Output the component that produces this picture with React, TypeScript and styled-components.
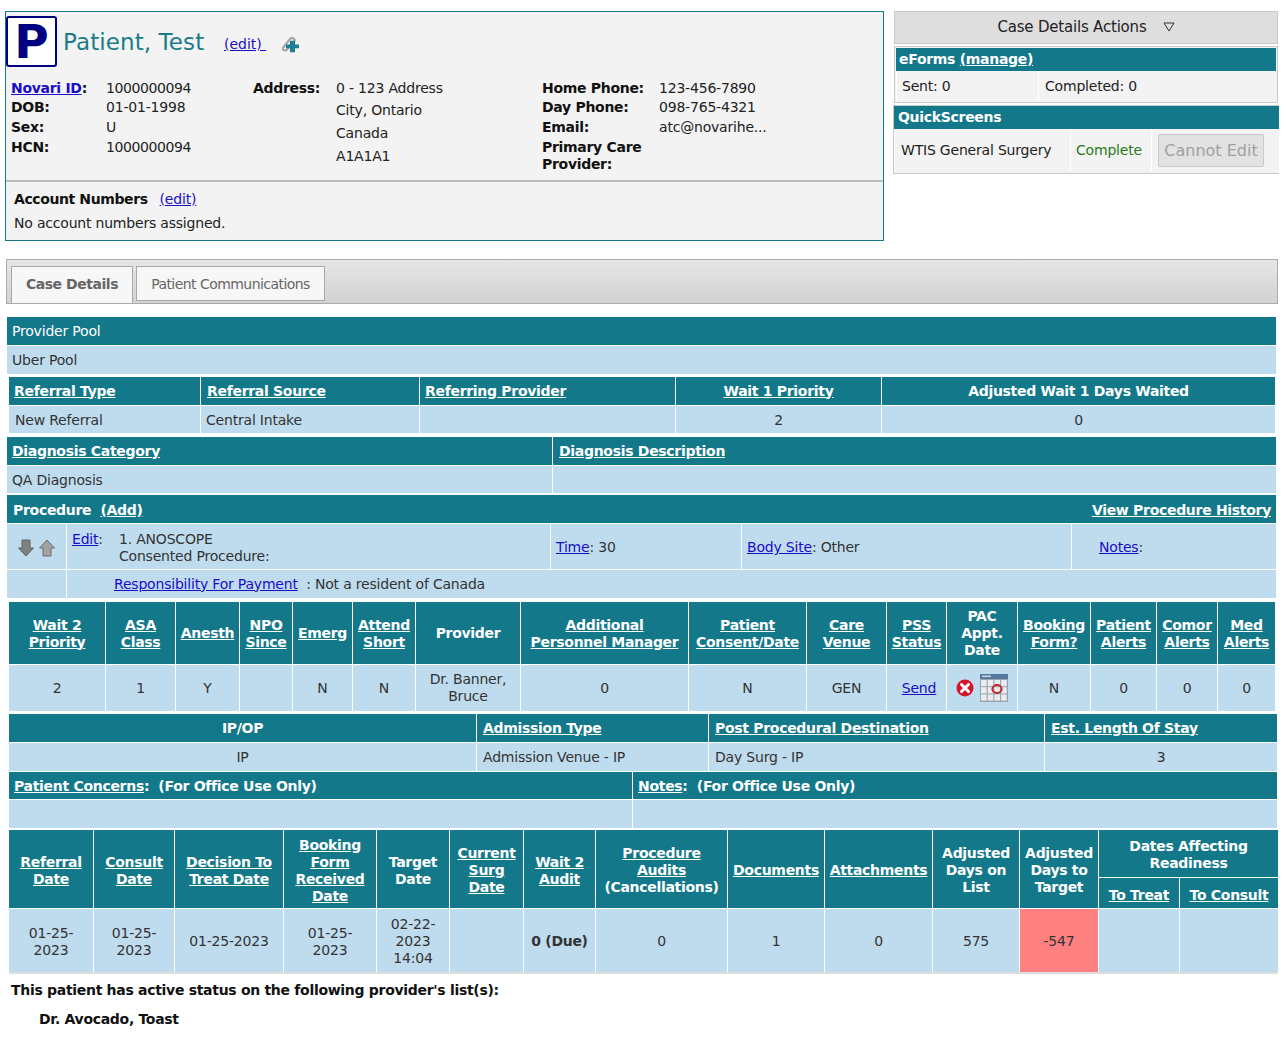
import React from 'react';
import styled, { createGlobalStyle } from 'styled-components';

const Global = createGlobalStyle`
  html, body { margin: 0; padding: 0; background: #fff; }
  body { font-family: "DejaVu Sans", Verdana, sans-serif; font-size: 14px; color: #333; width: 1286px; height: 1050px; overflow: hidden; }
  * { box-sizing: border-box; }
  a { color: #1a0dc8; text-decoration: underline; }
`;

const TEAL = '#137889';
const BLUE = '#bfdcef';

const Page = styled.div`
  display: flex;
  flex-direction: column;
  padding: 11px 0 0 0;
  letter-spacing: -0.2px;
`;
const Top = styled.div`
  display: flex;
  height: 248px;
  align-items: flex-start;
  padding-left: 5px;
`;
const PatientBox = styled.section`
  width: 879px;
  height: 230px;
  background: #f3f3f3;
  border: 1px solid ${TEAL};
  display: flex;
  flex-direction: column;
`;
const NameRow = styled.div`
  height: 57px;
  padding-top: 2px;
  display: flex;
  align-items: center;
`;
const LetterBadge = styled.div`
  width: 51px;
  height: 51px;
  border: 2px solid #000080;
  border-radius: 3px;
  background: #fff;
  color: #000080;
  font-weight: 700;
  font-size: 47px;
  line-height: 47px;
  text-align: center;
  letter-spacing: 0;
`;
const Name = styled.h1`
  margin: 0 0 0 6px;
  font-size: 23px;
  font-weight: 400;
  color: #1b7d88;
  letter-spacing: 0.1px;
  width: 161px;
  line-height: 30px;
`;
const NameEdit = styled.a`
  font-size: 14px;
  letter-spacing: 0;
  width: 55px;
  padding-top: 5px;
  white-space: pre;
`;
const ClipIcon = styled.svg`
  width: 20px;
  height: 20px;
  margin-top: 5px;
`;
const Info = styled.div`
  flex: 1;
  display: grid;
  grid-template-columns: 95px 147px 83px 206px 117px 1fr;
  padding: 10px 0 0 5px;
`;
const InfoStack = styled.div`
  display: flex;
  flex-direction: column;
`;
const InfoLine = styled.div<{ $h: number; $tight?: boolean }>`
  height: ${p => p.$h}px;
  line-height: ${p => p.$h}px;
  color: #222;
  white-space: nowrap;
  ${p => (p.$tight ? 'letter-spacing: -0.4px;' : '')}
`;
const InfoLabel = styled(InfoLine)`
  font-weight: 700;
  color: #111;
  letter-spacing: -0.3px;
`;
const WrapLabel = styled.div`
  font-weight: 700;
  color: #111;
  line-height: 17px;
  margin-top: 2px;
  letter-spacing: -0.3px;
`;
const BoldLink = styled.a`
  font-weight: 700;
`;
const Account = styled.div`
  border-top: 2px solid #bdbdbd;
  height: 60px;
  padding: 5px 8px;
  color: #222;
`;
const AccountTitle = styled.div`
  display: flex;
  height: 24px;
  align-items: center;
  gap: 12px;
  font-weight: 700;
  color: #111;
  letter-spacing: -0.4px;
  & a { font-weight: 400; letter-spacing: -0.2px; }
`;
const AccountText = styled.div`
  height: 24px;
  line-height: 24px;
`;
const Side = styled.aside`
  width: 386px;
  margin-left: 9px;
  display: flex;
  flex-direction: column;
`;
const ActionsBtn = styled.div`
  margin-left: 1px;
  width: 384px;
  height: 33px;
  background: #dedede;
  border: 1px solid #c8c8c8;
  display: flex;
  align-items: center;
  justify-content: center;
  gap: 16px;
  color: #222;
  font-size: 15px;
  padding-bottom: 2px;
`;
const Tri = styled.svg`
  width: 12px;
  height: 10px;
`;
const EForms = styled.div`
  margin: 2px 0 0 1px;
  width: 384px;
  height: 57px;
  background: #f3f3f3;
  border: 1px solid #c8c8c8;
  padding: 1px;
`;
const SideHead = styled.div<{ $pad: number }>`
  background: ${TEAL};
  color: #fff;
  font-weight: 700;
  height: 23px;
  line-height: 23px;
  padding-left: ${p => p.$pad}px;
  letter-spacing: -0.3px;
  & a { color: #fff; }
`;
const SideRow = styled.div<{ $cols: string; $h: number }>`
  display: grid;
  grid-template-columns: ${p => p.$cols};
  height: ${p => p.$h}px;
  align-items: center;
  color: #222;
`;
const SideCell = styled.div<{ $pad: number; $color?: string }>`
  padding-left: ${p => p.$pad}px;
  color: ${p => p.$color ?? '#222'};
  height: 100%;
  display: flex;
  align-items: center;
  border-left: 1px solid #fff;
  white-space: nowrap;
`;
const Quick = styled.div`
  margin-top: 2px;
  width: 386px;
  height: 69px;
  background: #f3f3f3;
  border: 1px solid #c8c8c8;
  border-right: 0;
`;
const DisabledBtn = styled.button`
  width: 106px;
  height: 33px;
  background: #e2e2e2;
  border: 1px solid #c9c9c9;
  border-radius: 2px;
  color: #a0a0a0;
  font: inherit;
  font-size: 16px;
  letter-spacing: 0;
  padding: 0;
`;
const Tabbed = styled.section`
  margin-left: 6px;
  width: 1272px;
`;
const TabBar = styled.div`
  height: 45px;
  border: 1px solid #ababab;
  background: linear-gradient(#e6e6e6, #d4d4d4 90%);
  padding: 6px 0 0 4px;
  display: flex;
  gap: 3px;
`;
const Tab = styled.div<{ $w: number; $active?: boolean }>`
  width: ${p => p.$w}px;
  height: ${p => (p.$active ? 37 : 35)}px;
  background: #f7f7f7;
  border: 1px solid #a8a8a8;
  ${p => (p.$active ? 'border-bottom: 0; font-weight: 700; letter-spacing: -0.45px;' : 'letter-spacing: -0.55px;')}
  color: #666;
  text-align: center;
  line-height: 35px;
`;
const Body = styled.div`
  margin-top: 13px;
  margin-left: 1px;
  width: 1271px;
  display: flex;
  flex-direction: column;
`;
const Row = styled.div<{ $cols: string; $h: number; $inset?: boolean; $mt?: number; $w: number; $nudge?: number }>`
  display: grid;
  grid-template-columns: ${p => p.$cols};
  column-gap: 1px;
  width: ${p => p.$w}px;
  height: ${p => p.$h}px;
  margin-top: ${p => p.$mt ?? 0}px;
  margin-left: ${p => (p.$inset ? 2 : 0)}px;
  ${p => (p.$nudge ? `& > * { padding-top: ${p.$nudge}px; }` : '')}
`;
const HeadCell = styled.div<{ $center?: boolean; $pad?: number; $plain?: boolean }>`
  background: ${TEAL};
  color: #fff;
  font-weight: ${p => (p.$plain ? 400 : 700)};
  letter-spacing: -0.3px;
  display: flex;
  flex-direction: column;
  justify-content: center;
  align-items: ${p => (p.$center ? 'center' : 'flex-start')};
  text-align: ${p => (p.$center ? 'center' : 'left')};
  padding-left: ${p => (p.$center ? 0 : p.$pad ?? 5)}px;
  line-height: 17px;
  white-space: nowrap;
  & a { color: #fff; }
`;
const Split = styled(HeadCell)`
  flex-direction: row;
  justify-content: space-between;
  align-items: center;
  padding-right: 5px;
`;
const DataCell = styled.div<{ $center?: boolean; $pad?: number; $bg?: string }>`
  background: ${p => p.$bg ?? BLUE};
  color: #333;
  display: flex;
  align-items: center;
  justify-content: ${p => (p.$center ? 'center' : 'flex-start')};
  text-align: ${p => (p.$center ? 'center' : 'left')};
  padding-left: ${p => (p.$center ? 0 : p.$pad ?? 5)}px;
  line-height: 17px;
`;
const SendCell = styled(DataCell)`
  padding-left: 5px;
`;
const BoldValue = styled.span`
  font-weight: 700;
  letter-spacing: -0.3px;
`;
const SingleRow = styled.div<{ $head?: boolean; $h: number; $mt?: number }>`
  width: 1269px;
  height: ${p => p.$h}px;
  margin-top: ${p => p.$mt ?? 0}px;
  line-height: ${p => p.$h}px;
  padding-left: 5px;
  background: ${p => (p.$head ? TEAL : BLUE)};
  color: ${p => (p.$head ? '#fff' : '#333')};
`;
const ProcCell = styled(DataCell)`
  && { padding-top: 0; }
`;
const ProcText = styled.div`
  display: grid;
  grid-template-columns: 47px 1fr;
  align-self: flex-start;
  padding-top: 7px;
  line-height: 17px;
`;
const ArrowsWrap = styled.div`
  display: flex;
  gap: 5px;
  margin-left: 5px;
`;
const Resp = styled.span`
  margin-left: 42px;
  white-space: pre;
`;
const PacIcons = styled.div`
  display: flex;
  align-items: center;
  gap: 6px;
`;
const LastGrid = styled.div`
  margin-left: 2px;
  margin-top: 2px;
  width: 1269px;
  height: 142px;
  display: grid;
  grid-template-columns: 84px 80px 108px 92px 72px 73px 71px 131px 96px 107px 86px 78px 80px 1fr;
  grid-template-rows: 47px 30px 63px;
  gap: 1px;
`;
const Spanned = styled(HeadCell)<{ $rows?: number; $colspan?: number }>`
  grid-row: span ${p => p.$rows ?? 1};
  grid-column: span ${p => p.$colspan ?? 1};
  padding-top: 3px;
`;
const SubHead = styled(HeadCell)`
  padding-top: 5px;
`;
const LastData = styled(DataCell)`
  padding-top: 2px;
`;
const EndLine = styled.div`
  margin-left: 2px;
  width: 1269px;
  height: 2px;
  background: #dedede;
`;
const Status = styled.div`
  margin: 6px 0 0 4px;
  height: 29px;
  line-height: 20px;
  font-weight: 700;
  color: #111;
  letter-spacing: -0.3px;
`;
const StatusName = styled.div`
  margin-left: 32px;
  line-height: 20px;
  font-weight: 700;
  color: #111;
  letter-spacing: -0.3px;
`;

const Arrow = ({ up }: { up?: boolean }) => (
  <svg width="16" height="18" viewBox="0 0 16 18" aria-hidden="true">
    <path
      d={up ? 'M8 1 L15.5 9 H12 V17 H4 V9 H0.5 Z' : 'M8 17 L15.5 9 H12 V1 H4 V9 H0.5 Z'}
      fill={up ? '#a2a2a2' : '#808080'}
      stroke={up ? '#6f6f6f' : '#606060'}
      strokeWidth="1"
    />
  </svg>
);

const CloseIcon = () => (
  <svg width="18" height="18" viewBox="0 0 18 18" aria-hidden="true">
    <circle cx="9" cy="9" r="8.5" fill="#d5152d" />
    <path d="M5.5 5.5 L12.5 12.5 M12.5 5.5 L5.5 12.5" stroke="#fff" strokeWidth="3" strokeLinecap="round" />
  </svg>
);

const CalendarIcon = () => (
  <svg width="28" height="28" viewBox="0 0 28 28" aria-hidden="true">
    <rect x="0" y="0" width="28" height="28" fill="#9aa3ad" />
    <rect x="0" y="0" width="28" height="5" fill="#54779c" />
    <rect x="2" y="1.5" width="9" height="1.6" fill="#c6d6e6" />
    {[0, 1, 2].map(r =>
      [0, 1, 2, 3].map(c => (
        <rect key={`${r}-${c}`} x={1 + c * 6.7} y={6 + r * 7.2} width="5.6" height="6.2" fill="#e9edf1" />
      ))
    )}
    <ellipse cx="17" cy="15" rx="4.6" ry="4" fill="none" stroke="#c5252d" strokeWidth="2" />
  </svg>
);

const C1 = '191px 218px 255px 205px 1fr';
const C2 = '545px 1fr';
const C3 = '59px 483px 190px 329px 1fr';
const C4 = '96px 69px 63px 52px 59px 62px 104px 167px 117px 79px 59px 70px 72px 65px 60px 1fr';
const C5 = '467px 231px 335px 1fr';
const C6 = '623px 1fr';

export default function App() {
  return (
    <Page>
      <Global />
      <Top>
        <PatientBox>
          <NameRow>
            <LetterBadge>P</LetterBadge>
            <Name>Patient, Test</Name>
            <NameEdit href="#">(edit) </NameEdit>
            <ClipIcon viewBox="0 0 20 20" aria-hidden="true">
              <path d="M3.5 14.5 L11 5 a2.4 2.4 0 0 1 4 3 L8 15.5 a2.6 2.6 0 0 1-4.5-1" fill="none" stroke="#a6a6a6" strokeWidth="2.2" />
              <path d="M11 8 h5 v4 h4 v4 h-4 v4 h-5 v-4 h-4 v-4 h4 Z" fill="#1f7f95" transform="translate(0 -1) scale(1 .96)" />
            </ClipIcon>
          </NameRow>
          <Info>
            <InfoStack>
              <InfoLabel $h={19}><BoldLink href="#">Novari ID</BoldLink>:</InfoLabel>
              <InfoLabel $h={19}>DOB:</InfoLabel>
              <InfoLabel $h={20}>Sex:</InfoLabel>
              <InfoLabel $h={20}>HCN:</InfoLabel>
            </InfoStack>
            <InfoStack>
              <InfoLine $h={19} $tight>1000000094</InfoLine>
              <InfoLine $h={19}>01-01-1998</InfoLine>
              <InfoLine $h={20}>U</InfoLine>
              <InfoLine $h={20} $tight>1000000094</InfoLine>
            </InfoStack>
            <InfoStack>
              <InfoLabel $h={19}>Address:</InfoLabel>
            </InfoStack>
            <InfoStack>
              <InfoLine $h={19}>0 - 123 Address</InfoLine>
              <InfoLine $h={24}>City, Ontario</InfoLine>
              <InfoLine $h={23}>Canada</InfoLine>
              <InfoLine $h={23}>A1A1A1</InfoLine>
            </InfoStack>
            <InfoStack>
              <InfoLabel $h={19}>Home Phone:</InfoLabel>
              <InfoLabel $h={19}>Day Phone:</InfoLabel>
              <InfoLabel $h={20}>Email:</InfoLabel>
              <WrapLabel>Primary Care<br />Provider:</WrapLabel>
            </InfoStack>
            <InfoStack>
              <InfoLine $h={19}>123-456-7890</InfoLine>
              <InfoLine $h={19}>098-765-4321</InfoLine>
              <InfoLine $h={20}>atc@novarihe...</InfoLine>
            </InfoStack>
          </Info>
          <Account>
            <AccountTitle>Account Numbers <a href="#">(edit)</a></AccountTitle>
            <AccountText>No account numbers assigned.</AccountText>
          </Account>
        </PatientBox>
        <Side>
          <ActionsBtn>
            Case Details Actions
            <Tri viewBox="0 0 12 10" aria-hidden="true"><path d="M1 1 H11 L6 9 Z" fill="none" stroke="#333" /></Tri>
          </ActionsBtn>
          <EForms>
            <SideHead $pad={3}>eForms <a href="#">(manage)</a></SideHead>
            <SideRow $cols="142px 1fr" $h={30}>
              <SideCell $pad={5}>Sent: 0</SideCell>
              <SideCell $pad={6}>Completed: 0</SideCell>
            </SideRow>
          </EForms>
          <Quick>
            <SideHead $pad={4}>QuickScreens</SideHead>
            <SideRow $cols="176px 81px 1fr" $h={42}>
              <SideCell $pad={6}>WTIS General Surgery</SideCell>
              <SideCell $pad={5} $color="#2a7a1a">Complete</SideCell>
              <SideCell $pad={6}><DisabledBtn>Cannot Edit</DisabledBtn></SideCell>
            </SideRow>
          </Quick>
        </Side>
      </Top>
      <Tabbed>
        <TabBar>
          <Tab $w={122} $active>Case Details</Tab>
          <Tab $w={189}>Patient Communications</Tab>
        </TabBar>
        <Body>
          <SingleRow $head $h={28}>Provider Pool</SingleRow>
          <SingleRow $h={28} $mt={1}>Uber Pool</SingleRow>
          <Row $inset $w={1266} $h={28} $mt={3} $cols={C1}>
            <HeadCell><a href="#">Referral Type</a></HeadCell>
            <HeadCell $pad={6}><a href="#">Referral Source</a></HeadCell>
            <HeadCell><a href="#">Referring Provider</a></HeadCell>
            <HeadCell $center><a href="#">Wait 1 Priority</a></HeadCell>
            <HeadCell $center>Adjusted Wait 1 Days Waited</HeadCell>
          </Row>
          <Row $inset $nudge={2} $w={1266} $h={27} $mt={1} $cols={C1}>
            <DataCell $pad={6}>New Referral</DataCell>
            <DataCell>Central Intake</DataCell>
            <DataCell />
            <DataCell $center>2</DataCell>
            <DataCell $center>0</DataCell>
          </Row>
          <Row $w={1269} $h={28} $mt={4} $cols={C2}>
            <HeadCell><a href="#">Diagnosis Category</a></HeadCell>
            <HeadCell $pad={6}><a href="#">Diagnosis Description</a></HeadCell>
          </Row>
          <Row $nudge={2} $w={1269} $h={27} $mt={1} $cols={C2}>
            <DataCell>QA Diagnosis</DataCell>
            <DataCell />
          </Row>
          <Row $nudge={2} $w={1269} $h={28} $mt={2} $cols="1fr">
            <Split $pad={6}>
              <span>Procedure&nbsp; <a href="#">(Add)</a></span>
              <a href="#">View Procedure History</a>
            </Split>
          </Row>
          <Row $nudge={2} $w={1269} $h={45} $mt={1} $cols={C3}>
            <DataCell $pad={6}>
              <ArrowsWrap><Arrow /><Arrow up /></ArrowsWrap>
            </DataCell>
            <ProcCell>
              <ProcText>
                <span><a href="#">Edit</a>:</span>
                <span>1. ANOSCOPE<br />Consented Procedure:</span>
              </ProcText>
            </ProcCell>
            <DataCell><span><a href="#">Time</a>: 30</span></DataCell>
            <DataCell><span><a href="#">Body Site</a>: Other</span></DataCell>
            <DataCell $pad={27}><span><a href="#">Notes</a>:</span></DataCell>
          </Row>
          <Row $w={1269} $h={28} $mt={1} $cols="59px 1fr">
            <DataCell />
            <DataCell>
              <Resp><a href="#">Responsibility For Payment</a>  : Not a resident of Canada</Resp>
            </DataCell>
          </Row>
          <Row $inset $nudge={1} $w={1266} $h={62} $mt={4} $cols={C4}>
            <HeadCell $center><a href="#">Wait 2<br />Priority</a></HeadCell>
            <HeadCell $center><a href="#">ASA<br />Class</a></HeadCell>
            <HeadCell $center><a href="#">Anesth</a></HeadCell>
            <HeadCell $center><a href="#">NPO<br />Since</a></HeadCell>
            <HeadCell $center><a href="#">Emerg</a></HeadCell>
            <HeadCell $center><a href="#">Attend<br />Short</a></HeadCell>
            <HeadCell $center>Provider</HeadCell>
            <HeadCell $center><a href="#">Additional<br />Personnel Manager</a></HeadCell>
            <HeadCell $center><a href="#">Patient<br />Consent/Date</a></HeadCell>
            <HeadCell $center><a href="#">Care<br />Venue</a></HeadCell>
            <HeadCell $center><a href="#">PSS<br />Status</a></HeadCell>
            <HeadCell $center>PAC<br />Appt.<br />Date</HeadCell>
            <HeadCell $center><a href="#">Booking<br />Form?</a></HeadCell>
            <HeadCell $center><a href="#">Patient<br />Alerts</a></HeadCell>
            <HeadCell $center><a href="#">Comor<br />Alerts</a></HeadCell>
            <HeadCell $center><a href="#">Med<br />Alerts</a></HeadCell>
          </Row>
          <Row $inset $w={1266} $h={46} $mt={1} $cols={C4}>
            <DataCell $center>2</DataCell>
            <DataCell $center>1</DataCell>
            <DataCell $center>Y</DataCell>
            <DataCell />
            <DataCell $center>N</DataCell>
            <DataCell $center>N</DataCell>
            <DataCell $center>Dr. Banner,<br />Bruce</DataCell>
            <DataCell $center>0</DataCell>
            <DataCell $center>N</DataCell>
            <DataCell $center>GEN</DataCell>
            <SendCell $center><a href="#">Send</a></SendCell>
            <DataCell $center><PacIcons><CloseIcon /><CalendarIcon /></PacIcons></DataCell>
            <DataCell $center>N</DataCell>
            <DataCell $center>0</DataCell>
            <DataCell $center>0</DataCell>
            <DataCell $center>0</DataCell>
          </Row>
          <Row $inset $w={1268} $h={28} $mt={3} $cols={C5}>
            <HeadCell $center>IP/OP</HeadCell>
            <HeadCell $pad={6}><a href="#">Admission Type</a></HeadCell>
            <HeadCell $pad={6}><a href="#">Post Procedural Destination</a></HeadCell>
            <HeadCell $pad={6}><a href="#">Est. Length Of Stay</a></HeadCell>
          </Row>
          <Row $inset $w={1268} $h={28} $mt={1} $cols={C5}>
            <DataCell $center>IP</DataCell>
            <DataCell $pad={6}>Admission Venue - IP</DataCell>
            <DataCell $pad={6}>Day Surg - IP</DataCell>
            <DataCell $center>3</DataCell>
          </Row>
          <Row $inset $nudge={2} $w={1268} $h={27} $mt={1} $cols={C6}>
            <HeadCell><span><a href="#">Patient Concerns</a>:&nbsp; (For Office Use Only)</span></HeadCell>
            <HeadCell><span><a href="#">Notes</a>:&nbsp; (For Office Use Only)</span></HeadCell>
          </Row>
          <Row $inset $w={1268} $h={28} $mt={1} $cols={C6}>
            <DataCell />
            <DataCell />
          </Row>
          <LastGrid>
            <Spanned $center $rows={2}><a href="#">Referral<br />Date</a></Spanned>
            <Spanned $center $rows={2}><a href="#">Consult<br />Date</a></Spanned>
            <Spanned $center $rows={2}><a href="#">Decision To<br />Treat Date</a></Spanned>
            <Spanned $center $rows={2}><a href="#">Booking<br />Form<br />Received<br />Date</a></Spanned>
            <Spanned $center $rows={2}>Target<br />Date</Spanned>
            <Spanned $center $rows={2}><a href="#">Current<br />Surg<br />Date</a></Spanned>
            <Spanned $center $rows={2}><a href="#">Wait 2<br />Audit</a></Spanned>
            <Spanned $center $rows={2}><a href="#">Procedure<br />Audits</a><span>(Cancellations)</span></Spanned>
            <Spanned $center $rows={2}><a href="#">Documents</a></Spanned>
            <Spanned $center $rows={2}><a href="#">Attachments</a></Spanned>
            <Spanned $center $rows={2}>Adjusted<br />Days on<br />List</Spanned>
            <Spanned $center $rows={2}>Adjusted<br />Days to<br />Target</Spanned>
            <Spanned $center $colspan={2}>Dates Affecting<br />Readiness</Spanned>
            <SubHead $center><a href="#">To Treat</a></SubHead>
            <SubHead $center><a href="#">To Consult</a></SubHead>
            <LastData $center>01-25-<br />2023</LastData>
            <LastData $center>01-25-<br />2023</LastData>
            <LastData $center>01-25-2023</LastData>
            <LastData $center>01-25-<br />2023</LastData>
            <LastData $center>02-22-<br />2023<br />14:04</LastData>
            <LastData />
            <LastData $center><BoldValue>0 (Due)</BoldValue></LastData>
            <LastData $center>0</LastData>
            <LastData $center>1</LastData>
            <LastData $center>0</LastData>
            <LastData $center>575</LastData>
            <LastData $center $bg="#ff8080">-547</LastData>
            <LastData />
            <LastData />
          </LastGrid>
          <EndLine />
          <Status>This patient has active status on the following provider's list(s):</Status>
          <StatusName>Dr. Avocado, Toast</StatusName>
        </Body>
      </Tabbed>
    </Page>
  );
}
